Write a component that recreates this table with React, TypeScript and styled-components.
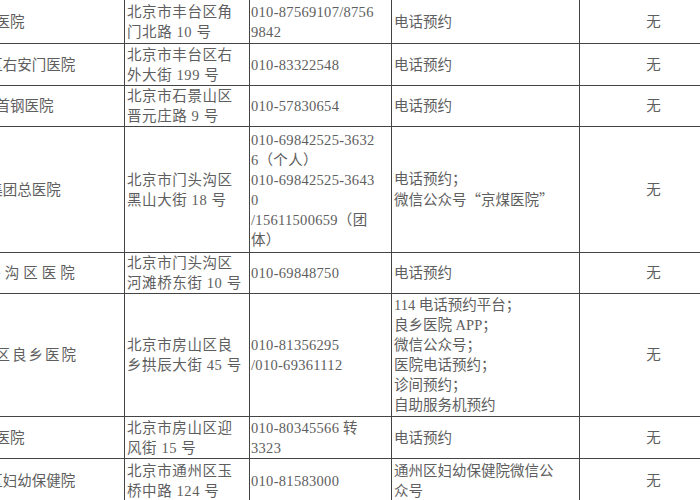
import React from "react";
import styled, { createGlobalStyle } from "styled-components";

const GlobalStyle = createGlobalStyle`
  html, body {
    margin: 0;
    padding: 0;
    background: #ffffff;
    overflow: hidden;
  }
  body {
    font-family: "Liberation Serif", "Noto Sans CJK SC", serif;
  }
`;

type Row = {
  name: string;
  spread?: number;
  address: string[];
  phone: string[];
  method: React.ReactNode[];
  note: string;
  height: number;
};

const Q = styled.span`
  font-family: "Noto Sans CJK SC", sans-serif;
`;

const rows: Row[] = [
  {
    name: "南苑医院",
    address: ["北京市丰台区角", "门北路 10 号"],
    phone: ["010-87569107/8756", "9842"],
    method: ["电话预约"],
    note: "无",
    height: 44,
  },
  {
    name: "北京市丰台区右安门医院",
    address: ["北京市丰台区右", "外大街 199 号"],
    phone: ["010-83322548"],
    method: ["电话预约"],
    note: "无",
    height: 42,
  },
  {
    name: "北京大学首钢医院",
    address: ["北京市石景山区", "晋元庄路 9 号"],
    phone: ["010-57830654"],
    method: ["电话预约"],
    note: "无",
    height: 41,
  },
  {
    name: "北京京煤集团总医院",
    address: ["北京市门头沟区", "黑山大街 18 号"],
    phone: [
      "010-69842525-3632",
      "6（个人）",
      "010-69842525-3643",
      "0",
      "/15611500659（团",
      "体）",
    ],
    method: [
      "电话预约；",
      <>
        微信公众号<Q>“</Q>京煤医院<Q>”</Q>
      </>,
    ],
    note: "无",
    height: 126,
  },
  {
    name: "北京市门头沟区医院",
    spread: 4,
    address: ["北京市门头沟区", "河滩桥东街 10 号"],
    phone: ["010-69848750"],
    method: ["电话预约"],
    note: "无",
    height: 41,
  },
  {
    name: "北京市房山区良乡医院",
    spread: 2,
    address: ["北京市房山区良", "乡拱辰大街 45 号"],
    phone: ["010-81356295", "/010-69361112"],
    method: [
      "114 电话预约平台；",
      "良乡医院 APP；",
      "微信公众号；",
      "医院电话预约；",
      "诊间预约；",
      "自助服务机预约",
    ],
    note: "无",
    height: 123,
  },
  {
    name: "燕化医院",
    address: ["北京市房山区迎", "风街 15 号"],
    phone: ["010-80345566 转", "3323"],
    method: ["电话预约"],
    note: "无",
    height: 42,
  },
  {
    name: "北京市通州区妇幼保健院",
    address: ["北京市通州区玉", "桥中路 124 号"],
    phone: ["010-81583000"],
    method: ["通州区妇幼保健院微信公", "众号"],
    note: "无",
    height: 44,
  },
];

const App = () => {
  return (
    <Page>
      <GlobalStyle />
      <Table>
        <colgroup>
          <col style={{ width: 258 }} />
          <col style={{ width: 125 }} />
          <col style={{ width: 142 }} />
          <col style={{ width: 188 }} />
          <col style={{ width: 148 }} />
        </colgroup>
        <tbody>
          {rows.map((row, i) => (
            <Tr key={i} $h={row.height}>
              <NameCell $spread={row.spread ?? 0}>{row.name}</NameCell>
              <AddressCell>
                {row.address.map((line, j) => (
                  <Line key={j}>{line}</Line>
                ))}
              </AddressCell>
              <PhoneCell>
                {row.phone.map((line, j) => (
                  <Line key={j}>{line}</Line>
                ))}
              </PhoneCell>
              <MethodCell>
                {row.method.map((line, j) => (
                  <Line key={j}>{line}</Line>
                ))}
              </MethodCell>
              <NoteCell>{row.note}</NoteCell>
            </Tr>
          ))}
        </tbody>
      </Table>
    </Page>
  );
};

const Page = styled.div`
  width: 700px;
  height: 500px;
  overflow: hidden;
  background: #ffffff;
`;

const Table = styled.table`
  margin-left: -134px;
  margin-top: -1px;
  width: 861px;
  table-layout: fixed;
  border-collapse: collapse;
  font-size: 14.5px;
  line-height: 20px;
  color: #5e5e5e;
`;

const Tr = styled.tr<{ $h: number }>`
  height: ${(p) => p.$h}px;
`;

const Cell = styled.td`
  border: 1px solid #444444;
  padding: 0 2px;
  vertical-align: middle;
  text-align: left;
  overflow: hidden;
`;

const NameCell = styled(Cell)<{ $spread: number }>`
  text-align: center;
  white-space: nowrap;
  padding: 0;
  letter-spacing: ${(p) => p.$spread}px;
`;

const AddressCell = styled(Cell)`
  letter-spacing: 0.6px;
`;

const PhoneCell = styled(Cell)`
  padding: 0 0 0 1px;
  letter-spacing: 0.3px;
`;

const MethodCell = styled(Cell)``;

const NoteCell = styled(Cell)`
  text-align: center;
`;

const Line = styled.div`
  white-space: nowrap;
`;

export default App;
